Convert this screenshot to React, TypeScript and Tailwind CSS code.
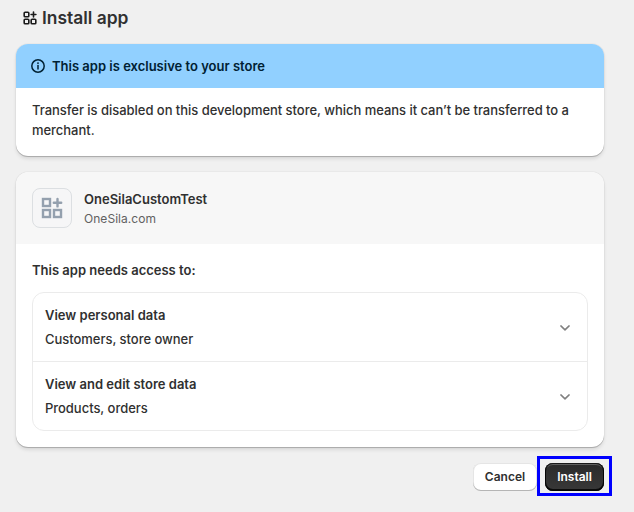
function AppsGlyph({ className, strokeWidth }: { className: string; strokeWidth: number }) {
  return (
    <svg className={className} viewBox="0 0 22 22" fill="none" stroke="currentColor" strokeWidth={strokeWidth}>
      <rect x="2" y="2" width="7" height="7" />
      <rect x="2" y="13" width="7" height="7" />
      <rect x="13" y="13" width="7" height="7" />
      <path d="M16.5 2v7.4M12.8 5.7h7.4" strokeLinecap="round" />
    </svg>
  );
}

function TitleGlyph() {
  return (
    <svg className="h-[14px] w-[14px] shrink-0 text-[#1a1a1a]" viewBox="0 0 14 14" fill="none" stroke="currentColor" strokeWidth="1.6">
      <rect x="1.2" y="1.2" width="4.6" height="4.6" rx="0.9" />
      <rect x="1.2" y="8.2" width="4.6" height="4.6" rx="0.9" />
      <rect x="8.2" y="8.2" width="4.6" height="4.6" rx="0.9" />
      <path d="M10.5 1.1v4.8M8.1 3.5h4.8" strokeLinecap="round" />
    </svg>
  );
}

function InfoGlyph() {
  return (
    <svg className="h-[14px] w-[14px] shrink-0 text-[#002133]" viewBox="0 0 14 14" fill="none" stroke="currentColor" strokeWidth="1.5">
      <circle cx="7" cy="7" r="6.2" />
      <path d="M7 6.4v3.6" strokeLinecap="round" />
      <circle cx="7" cy="4.1" r="0.95" fill="currentColor" stroke="none" />
    </svg>
  );
}

function Chevron() {
  return (
    <svg className="mt-[2px] h-[6px] w-[10px] shrink-0 text-[#808080]" viewBox="0 0 10 6" fill="none" stroke="currentColor" strokeWidth="1.5" strokeLinecap="round" strokeLinejoin="round">
      <path d="M0.9 0.9L5 4.9L9.1 0.9" />
    </svg>
  );
}

function ScopeRow({ title, detail }: { title: string; detail: string }) {
  return (
    <div className="flex items-center justify-between py-3 pr-[17px] pl-3">
      <div className="flex flex-col gap-1">
        <h3 className="font-semibold">{title}</h3>
        <p className="font-medium tracking-[-0.034px]">{detail}</p>
      </div>
      <Chevron />
    </div>
  );
}

export default function App() {
  return (
    <main className="h-[512px] w-[634px] overflow-hidden bg-[#f0f0f0] pl-4 font-['Inter',sans-serif] text-[13px] leading-5 text-[#303030]">
      <header className="flex h-11 items-start gap-[5px] pt-[6px] pl-[7px]">
        <div className="pt-[5px]">
          <TitleGlyph />
        </div>
        <h1 className="text-[17.4px] leading-6 font-semibold">Install app</h1>
      </header>

      <section className="w-[588px] overflow-hidden rounded-xl bg-white shadow-[0_0_1px_rgba(26,26,26,0.3),0_1px_0_rgba(0,0,0,0.17),0_3px_4px_-1px_rgba(26,26,26,0.16)]">
        <div className="flex h-11 items-center gap-[7px] bg-[#91d0ff] pl-[15px] text-[#002133]">
          <InfoGlyph />
          <h2 className="font-semibold">This app is exclusive to your store</h2>
        </div>
        <p className="px-4 pt-3 pb-4 font-medium tracking-[-0.034px]">
          Transfer is disabled on this development store, which means it can’t be transferred to a
          <br />
          merchant.
        </p>
      </section>

      <section className="mt-4 w-[588px] overflow-hidden rounded-xl bg-white shadow-[0_0_1px_rgba(26,26,26,0.3),0_1px_0_rgba(0,0,0,0.17),0_3px_4px_-1px_rgba(26,26,26,0.16)]">
        <div className="flex items-center gap-3 bg-[#f7f7f7] p-4">
          <div className="flex h-10 w-10 items-center justify-center rounded-lg border border-[#dcdfe2] bg-[#f6f6f7]">
            <AppsGlyph className="h-[22px] w-[22px] text-[#94a0ae]" strokeWidth={2.4} />
          </div>
          <div className="h-10">
            <h2 className="leading-[23px] font-semibold">OneSilaCustomTest</h2>
            <p className="text-[12px] leading-4 tracking-[0.05px] text-[#616161]">OneSila.com</p>
          </div>
        </div>
        <div className="p-4">
          <h2 className="font-semibold">This app needs access to:</h2>
          <div className="mt-3 divide-y divide-[#ebebeb] rounded-xl border border-[#ebebeb]">
            <ScopeRow title="View personal data" detail="Customers, store owner" />
            <ScopeRow title="View and edit store data" detail="Products, orders" />
          </div>
        </div>
      </section>

      <footer className="relative mt-4 flex w-[588px] justify-end gap-2 text-[12px] leading-4 font-semibold">
        <button className="h-7 w-16 rounded-lg bg-white shadow-[inset_0_-1px_0_#b5b5b5,inset_0_0_0_1px_rgba(0,0,0,0.1)]">
          Cancel
        </button>
        <button className="h-7 w-[59px] rounded-lg bg-linear-to-b from-[#2b2b2b] to-[#383838] text-white shadow-[inset_0_-1px_0_1px_rgba(0,0,0,0.8),inset_0_0_0_1px_#1a1a1a,inset_0_2px_0_rgba(255,255,255,0.25)]">
          Install
        </button>
        <div className="pointer-events-none absolute -top-[7px] -right-[8px] h-10 w-[75px] border-[3px] border-[#0000ff]" />
      </footer>
    </main>
  );
}
